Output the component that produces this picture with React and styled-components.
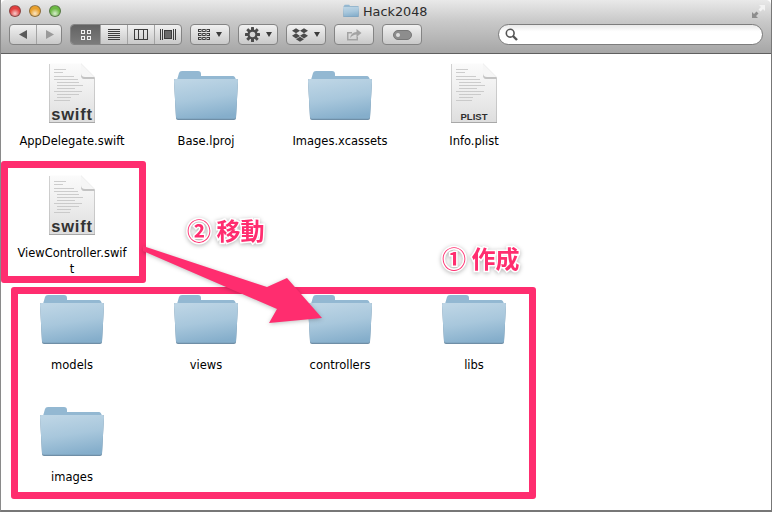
import React from "react";
import styled, { createGlobalStyle } from "styled-components";
import { FaDropbox } from "react-icons/fa";

const LABEL_FONT = `"DejaVu Sans", "Open Sans", sans-serif`;

const GlobalStyle = createGlobalStyle`
  html, body {
    margin: 0;
    padding: 0;
    background: #ffffff;
  }
  #root {
    width: 772px;
    height: 512px;
    overflow: hidden;
  }
`;

function App() {
  return (
    <>
      <GlobalStyle />
      <Page>
        <Window>
          <TitleBar>
            <TitleRow>
              <Lights>
                <Light $color="#e2403f" />
                <Light $color="#e9a02c" />
                <Light $color="#6cb944" />
              </Lights>
              <Title>
                <FolderIcon width={16} height={14} />
                Hack2048
              </Title>
              <ExpandIcon />
            </TitleRow>
            <Toolbar>
              <ToolGroup>
                <ToolSegment $w={26}><NavArrow dir="left" /></ToolSegment>
                <ToolSegment $w={24}><NavArrow dir="right" /></ToolSegment>
              </ToolGroup>
              <ToolGroup>
                <ToolSegment $w={29} $active><IconViewGrid /></ToolSegment>
                <ToolSegment $w={26}><IconViewList /></ToolSegment>
                <ToolSegment $w={26}><IconViewColumns /></ToolSegment>
                <ToolSegment $w={26}><IconViewFlow /></ToolSegment>
              </ToolGroup>
              <ToolButton><IconArrange /><Caret /></ToolButton>
              <ToolButton><IconGear /><Caret /></ToolButton>
              <ToolButton><DropboxGlyph /><Caret /></ToolButton>
              <ToolButton><IconShare /></ToolButton>
              <ToolButton><IconTag /></ToolButton>
              <SearchBox><IconSearch /></SearchBox>
            </Toolbar>
          </TitleBar>
          <FileArea>
            <FileRow>
              <DocFile name="AppDelegate.swift" badge="swift" />
              <FolderFile name="Base.lproj" />
              <FolderFile name="Images.xcassets" />
              <DocFile name="Info.plist" badge="PLIST" />
            </FileRow>
            <FileRow>
              <DocFile name="ViewController.swift" badge="swift" />
            </FileRow>
            <FileRow>
              <FolderFile name="models" />
              <FolderFile name="views" />
              <FolderFile name="controllers" />
              <FolderFile name="libs" />
            </FileRow>
            <FileRow>
              <FolderFile name="images" />
            </FileRow>
          </FileArea>
        </Window>

        <SourceFrame />
        <TargetFrame />
        <ArrowOverlay />
        <MoveNote>② 移動</MoveNote>
        <CreateNote>① 作成</CreateNote>
      </Page>
    </>
  );
}

function DocFile({ name, badge }) {
  return (
    <FileCell>
      <IconSlot>
        <DocIcon badge={badge} />
      </IconSlot>
      <FileName>{name}</FileName>
    </FileCell>
  );
}

function FolderFile({ name }) {
  return (
    <FileCell>
      <FolderSlot>
        <FolderIcon width={64} height={50} />
      </FolderSlot>
      <FileName>{name}</FileName>
    </FileCell>
  );
}

function FolderIcon({ width, height }) {
  return (
    <svg width={width} height={height} viewBox="0 0 64 50">
      <defs>
        <linearGradient id="folderFront" x1="0.3" y1="0" x2="0.55" y2="1">
          <stop offset="0" stopColor="#bdd5e5" />
          <stop offset="0.5" stopColor="#a8c7dc" />
          <stop offset="1" stopColor="#85aecb" />
        </linearGradient>
      </defs>
      <path d="M3 9 L5 2 Q5.500 0 8 0 L24 0 Q27 0 27 3 L27 5 L59 5 Q61 5 62 9 Z" fill="#93b8d2" />
      <path d="M1 8 L63 8 Q64 8 64 10 L62 47 Q62 49 60 49 L4 49 Q2 49 2 47 L0 10 Q0 8 1 8 Z" fill="#6f8ea6" />
      <path d="M1 8 L63 8 Q64 8 64 10 L62 46 Q62 47.700 60 47.700 L4 47.700 Q2 47.700 2 46 L0 10 Q0 8 1 8 Z" fill="url(#folderFront)" />
    </svg>
  );
}

const DOC_LINES = [
  [6, 6, 12], [6, 9, 9], [6, 13, 20], [6, 16, 24], [9, 19, 22], [9, 22, 26],
  [9, 25, 18], [6, 28, 28], [9, 31, 22], [9, 34, 14], [6, 37, 16],
];

function DocIcon({ badge }) {
  const isSwift = badge === "swift";
  return (
    <svg width={48} height={61} viewBox="0 0 48 61">
      <defs>
        <linearGradient id="docPage" x1="0" y1="0" x2="0" y2="1">
          <stop offset="0" stopColor="#fbfbfb" />
          <stop offset="0.55" stopColor="#ececec" />
          <stop offset="1" stopColor="#dedede" />
        </linearGradient>
      </defs>
      <path d="M1 1 L33 1 L47 15 L47 60 L1 60 Z" fill="#a8a8a8" />
      <path d="M1.500 0.500 L33 0.500 L46.500 14 L46.500 59 L1.500 59 Z" fill="url(#docPage)" />
      <path d="M33 0.500 L46.500 14 L46.500 16 L36 16 Q33 16 33 12 Z" fill="#c3c3c3" />
      <path d="M33 0.500 L46.500 14 L37 14 Q33 14 33 10 Z" fill="#f6f6f6" />
      {DOC_LINES.map(([x, y, w]) => (
        <rect key={y} x={x} y={y} width={w} height={0.8} fill="#c2c2c2" />
      ))}
      {isSwift ? (
        <text x="24" y="56.500" textAnchor="middle" fontFamily="'Liberation Sans', sans-serif" fontWeight="700" fontSize="16.500" letterSpacing="0.8" fill="#333333">
          swift
        </text>
      ) : (
        <text x="24" y="57" textAnchor="middle" fontFamily="'Liberation Sans', sans-serif" fontWeight="700" fontSize="9.500" fill="#2e2e2e">
          PLIST
        </text>
      )}
    </svg>
  );
}

function ExpandIcon() {
  return (
    <ExpandSvg width={15} height={15} viewBox="0 0 15 15">
      <path d="M8 1 L14 1 L14 7 L12 5 L9.500 7.500 L7.500 5.500 L10 3 Z" fill="#f3f3f3" />
      <path d="M1 8 L1 14 L7 14 L5 12 L7.500 9.500 L5.500 7.500 L3 10 Z" fill="#8d8d8d" />
    </ExpandSvg>
  );
}

function NavArrow({ dir }) {
  const left = dir === "left";
  return (
    <svg width={11} height={11} viewBox="0 0 11 11">
      <path d={left ? "M1 5.500 L9 1 L9 10 Z" : "M10 5.500 L2 1 L2 10 Z"} fill={left ? "#5a5a5a" : "#9a9a9a"} />
    </svg>
  );
}

function IconViewGrid() {
  return (
    <svg width={12} height={12} viewBox="0 0 12 12" fill="none" stroke="#f1f1f1">
      <rect x="1.500" y="1.500" width="3" height="3" />
      <rect x="7.500" y="1.500" width="3" height="3" />
      <rect x="1.500" y="7.500" width="3" height="3" />
      <rect x="7.500" y="7.500" width="3" height="3" />
    </svg>
  );
}

function IconViewList() {
  return (
    <svg width={12} height={12} viewBox="0 0 12 12" stroke="#3d3d3d">
      {[0.5, 2.5, 4.5, 6.5, 8.5, 10.5].map((y) => (
        <line key={y} x1="0" x2="12" y1={y} y2={y} />
      ))}
    </svg>
  );
}

function IconViewColumns() {
  return (
    <svg width={14} height={11} viewBox="0 0 14 11" fill="none" stroke="#3d3d3d">
      <rect x="0.500" y="0.500" width="13" height="10" />
      <line x1="4.500" x2="4.500" y1="0" y2="11" />
      <line x1="9.500" x2="9.500" y1="0" y2="11" />
    </svg>
  );
}

function IconViewFlow() {
  return (
    <svg width={16} height={11} viewBox="0 0 16 11" fill="none" stroke="#3d3d3d">
      <rect x="4.500" y="1.500" width="7" height="8" fill="#6a6a6a" />
      <line x1="0.500" x2="0.500" y1="0" y2="11" />
      <line x1="2.500" x2="2.500" y1="0" y2="11" />
      <line x1="13.500" x2="13.500" y1="0" y2="11" />
      <line x1="15.500" x2="15.500" y1="0" y2="11" />
    </svg>
  );
}

function IconArrange() {
  return (
    <svg width={12} height={11} viewBox="0 0 12 11" fill="none" stroke="#3d3d3d" strokeWidth="1">
      {[0, 4, 8].map((y) => (
        <g key={y}>
          <rect x="0.500" y={y + 0.5} width="2.500" height="2" />
          <rect x="4.700" y={y + 0.5} width="2.500" height="2" />
          <rect x="9" y={y + 0.5} width="2.500" height="2" />
        </g>
      ))}
    </svg>
  );
}

function IconGear() {
  return (
    <svg width={15} height={15} viewBox="0 0 15 15">
      <g fill="#4b4b4b">
        {[0, 45, 90, 135].map((a) => (
          <rect key={a} x="6" y="0" width="3" height="15" rx="0.500" transform={`rotate(${a} 7.500 7.500)`} />
        ))}
      </g>
      <circle cx="7.500" cy="7.500" r="5" fill="#4b4b4b" />
      <circle cx="7.500" cy="7.500" r="2.800" fill="#d5d5d5" />
    </svg>
  );
}

function IconShare() {
  return (
    <svg width={16} height={13} viewBox="0 0 16 13">
      <path d="M1 4 L6 4 L6 5.500 L2.500 5.500 L2.500 11 L10.500 11 L10.500 8.500 L12 8.500 L12 12.500 L1 12.500 Z" fill="#a3a3a3" />
      <path d="M4 10 Q5 4.500 10.500 4 L10.500 1 L15.500 5 L10.500 9 L10.500 6.500 Q7 6.500 4 10 Z" fill="#a3a3a3" />
    </svg>
  );
}

function IconTag() {
  return (
    <svg width={19} height={10} viewBox="0 0 19 10">
      <rect x="0.500" y="0.500" width="18" height="9" rx="4.500" fill="#8d8d8d" stroke="#777777" />
      <circle cx="5" cy="5" r="2" fill="#dedede" />
    </svg>
  );
}

function IconSearch() {
  return (
    <svg width={13} height={13} viewBox="0 0 13 13" fill="none" stroke="#555555">
      <circle cx="5.200" cy="5.200" r="3.900" strokeWidth="1.600" />
      <line x1="8" y1="8" x2="12" y2="12" strokeWidth="2.400" />
    </svg>
  );
}

function ArrowOverlay() {
  return (
    <ArrowSvg width={772} height={512} viewBox="0 0 772 512">
      <polygon
        points="143,246 267,287 287,278 322,318 269,323 277,309 143,251"
        fill="#ff2d6f"
      />
    </ArrowSvg>
  );
}

const Page = styled.div`
  position: relative;
  width: 772px;
  height: 512px;
  overflow: hidden;
  background: #ffffff;
`;

const Window = styled.div`
  width: 772px;
  height: 512px;
  background: #ffffff;
  border-left: 1px solid #8a8a8a;
  border-right: 1px solid #777777;
  border-bottom: 2px solid #777777;
  box-sizing: border-box;
`;

const TitleBar = styled.header`
  height: 54px;
  box-sizing: border-box;
  padding: 2px 8px 0 8px;
  background: linear-gradient(#e9e9e9, #c9c9c9 40%, #a6a6a6);
  border-bottom: 1px solid #5f5f5f;
  border-radius: 5px 5px 0 0;
`;

const TitleRow = styled.div`
  display: flex;
  align-items: center;
  position: relative;
  height: 18px;
`;

const Lights = styled.div`
  display: flex;
  gap: 8px;
`;

const Light = styled.span`
  width: 12px;
  height: 12px;
  border-radius: 50%;
  box-sizing: border-box;
  border: 1px solid rgba(70, 70, 70, 0.55);
  background: radial-gradient(circle at 50% 75%, #ffffff -20%, ${(p) => p.$color} 55%);
`;

const Title = styled.div`
  position: absolute;
  left: 334px;
  top: 0;
  display: flex;
  align-items: center;
  gap: 4px;
  height: 18px;
  font: 12.800px ${LABEL_FONT};
  color: #2c2c2c;
`;

const ExpandSvg = styled.svg`
  margin-left: auto;
  margin-right: -3px;
`;

const Toolbar = styled.div`
  display: flex;
  align-items: center;
  gap: 8px;
  margin-top: 4px;
  height: 21px;
`;

const ToolGroup = styled.div`
  display: flex;
  height: 21px;
  box-sizing: border-box;
  border: 1px solid #848484;
  border-radius: 4px;
  overflow: hidden;
  background: linear-gradient(#f1f1f1, #c9c9c9);
`;

const ToolSegment = styled.div`
  display: flex;
  align-items: center;
  justify-content: center;
  width: ${(p) => p.$w}px;
  border-right: 1px solid #a3a3a3;
  background: ${(p) => (p.$active ? "linear-gradient(#626262, #7c7c7c)" : "none")};

  &:last-child {
    border-right: 0;
  }
`;

const ToolButton = styled.div`
  display: flex;
  align-items: center;
  justify-content: center;
  gap: 6px;
  width: 40px;
  height: 21px;
  box-sizing: border-box;
  border: 1px solid #848484;
  border-radius: 4px;
  background: linear-gradient(#f1f1f1, #c9c9c9);
`;

const Caret = styled.span`
  width: 0;
  height: 0;
  border-left: 3.500px solid transparent;
  border-right: 3.500px solid transparent;
  border-top: 5px solid #3c3c3c;
`;

const DropboxGlyph = styled(FaDropbox)`
  width: 16px;
  height: 16px;
  color: #4b4b4b;
`;

const SearchBox = styled.div`
  display: flex;
  align-items: center;
  margin-left: auto;
  width: 265px;
  height: 21px;
  box-sizing: border-box;
  padding-left: 6px;
  border: 1px solid #7d7d7d;
  border-radius: 11px;
  background: linear-gradient(#e9e9e9, #ffffff 35%);
`;

const FileArea = styled.main`
  padding: 2px 0 0 4px;
`;

const FileRow = styled.div`
  display: flex;
  height: 112px;
`;

const FileCell = styled.div`
  display: flex;
  flex-direction: column;
  align-items: center;
  width: 134px;
`;

const IconSlot = styled.div`
  display: flex;
  align-items: flex-end;
  justify-content: center;
  height: 68px;
  box-sizing: border-box;
`;

const FolderSlot = styled(IconSlot)`
  padding-bottom: 3px;
`;

const FileName = styled.div`
  width: 112px;
  margin-top: 9px;
  font: 11.500px/16px ${LABEL_FONT};
  color: #000000;
  text-align: center;
  overflow-wrap: anywhere;
`;

const SourceFrame = styled.div`
  position: absolute;
  left: 1px;
  top: 161px;
  width: 145px;
  height: 122px;
  box-sizing: border-box;
  border: 7px solid #ff2d6f;
  border-radius: 3px;
`;

const TargetFrame = styled.div`
  position: absolute;
  left: 11px;
  top: 287px;
  width: 525px;
  height: 212px;
  box-sizing: border-box;
  border: 7px solid #ff2d6f;
  border-radius: 3px;
`;

const ArrowSvg = styled.svg`
  position: absolute;
  left: 0;
  top: 0;
  filter: drop-shadow(0 1px 2px rgba(0, 0, 0, 0.25));
`;

const Note = styled.div`
  position: absolute;
  font: 700 24px/30px "Noto Sans CJK JP", sans-serif;
  color: #ff2d6f;
  white-space: nowrap;
  -webkit-text-stroke: 3px #ffffff;
  paint-order: stroke fill;
  filter: drop-shadow(0 1px 2px rgba(0, 0, 0, 0.3));
`;

const MoveNote = styled(Note)`
  left: 187px;
  top: 215px;
`;

const CreateNote = styled(Note)`
  left: 442px;
  top: 243px;
`;

export default App;
